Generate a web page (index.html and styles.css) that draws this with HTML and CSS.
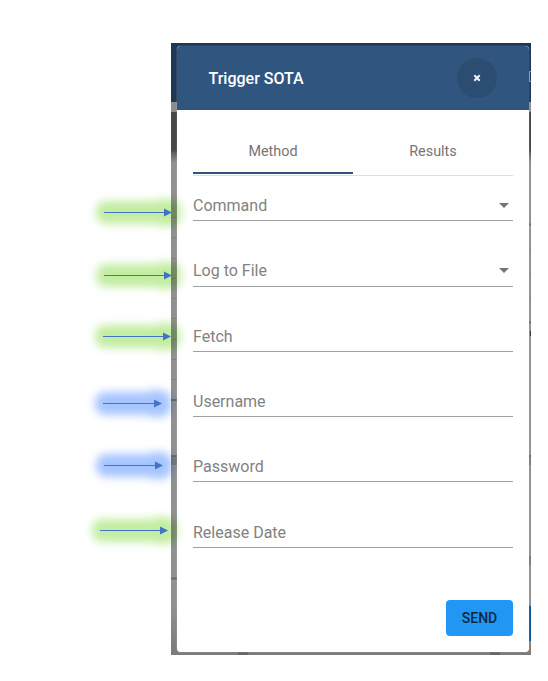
FILE: index.html
```html
<!DOCTYPE html>
<html lang="en">
<head>
<meta charset="utf-8">
<title>Trigger SOTA</title>
<link rel="stylesheet" href="styles.css">
</head>
<body>
<main class="backdrop">
  <svg class="page-edges" width="360" height="612" viewBox="171 43 360 612" aria-hidden="true">
    <path d="M171 217.500h6M171 237.500h6M171 258.500h6M171 278.500h6M171 298.500h6M171 318.500h6M171 339.500h6M171 359.500h6M171 379.500h6M528 249.500h3M528 273.500h3M528 297.500h3" stroke="#828282"/>
    <path d="M171 400h6M171 456h6M171 578.500h6M528 224.500h3M528 322.500h3M528 456h3M528 557.500h3" stroke="#6a6a6a" stroke-width="2"/>
    <path d="M171 457h6v8h-6zM528 457h3v8h-3zM528 558h3v7h-3z" fill="#7c7c7c"/>
    <path d="M530 331h1v5h-1z" fill="#333"/>
    <path d="M238 652h10v3h-10zM490 652h10v3h-10z" fill="#666"/>
    <path d="M532 71.500h-2.500v10h3" fill="none" stroke="#8d99a5"/>
    <path d="M528 606h3v35h-3z" fill="#0b5795"/>
  </svg>
  <section class="dialog">
    <header class="dialog-header">
      <h1>Trigger SOTA</h1>
      <button class="close" aria-label="Close"><svg width="8" height="8" viewBox="0 0 8 8"><path d="M1.300 1.300l5.400 5.400M6.700 1.300L1.300 6.700" stroke="#f0f3f7" stroke-width="2"/></svg></button>
    </header>
    <nav class="tabs">
      <a class="tab active">Method</a>
      <a class="tab">Results</a>
    </nav>
    <form class="fields">
      <div class="field"><span>Command</span><i class="caret"></i></div>
      <div class="field"><span>Log to File</span><i class="caret"></i></div>
      <div class="field"><span>Fetch</span></div>
      <div class="field"><span>Username</span></div>
      <div class="field"><span>Password</span></div>
      <div class="field"><span>Release Date</span></div>
    </form>
    <footer class="actions"><button class="send">SEND</button></footer>
  </section>
</main>
<svg class="annotations" width="548" height="681" viewBox="0 0 548 681" aria-hidden="true">
  <defs>
    <filter id="glow" x="-30%" y="-80%" width="160%" height="260%"><feGaussianBlur stdDeviation="4"/></filter>
    <g id="halo"><rect x="-8" y="-11.500" width="84" height="23" rx="10"/><rect x="48" y="-13.500" width="29" height="27" rx="11"/></g>
    <g id="halo-short"><rect x="-8" y="-11.500" width="75" height="23" rx="10"/><rect x="40" y="-13.500" width="28" height="27" rx="11"/></g>
    <g id="arrow"><path d="M0 0h61" stroke="#4472c4"/><path d="M60 -4l8 4-8 4z" fill="#4472c4"/></g>
    <g id="arrow-short"><path d="M0 0h53" stroke="#4472c4"/><path d="M51 -4l8 4-8 4z" fill="#4472c4"/></g>
  </defs>
  <g class="green">
    <use href="#halo" x="104" y="212.500" filter="url(#glow)"/>
    <use href="#halo" x="104" y="275.500" filter="url(#glow)"/>
    <use href="#halo" x="103" y="336.500" filter="url(#glow)"/>
    <use href="#halo" x="100" y="530.500" filter="url(#glow)"/>
  </g>
  <g class="blue">
    <use href="#halo-short" x="103" y="403.500" filter="url(#glow)"/>
    <use href="#halo-short" x="104" y="465.500" filter="url(#glow)"/>
  </g>
  <use href="#arrow" x="104" y="212.500"/>
  <use href="#arrow" x="104" y="275.500"/>
  <use href="#arrow" x="103" y="336.500"/>
  <use href="#arrow-short" x="103" y="403.500"/>
  <use href="#arrow-short" x="104" y="465.500"/>
  <use href="#arrow" x="100" y="530.500"/>
</svg>
</body>
</html>
```
FILE: styles.css
```css
* { box-sizing: border-box; }
body {
  margin: 0;
  height: 681px;
  padding: 43px 17px 26px 171px;
  overflow: hidden;
  background: #fff;
  font-family: Roboto, "Liberation Sans", sans-serif;
}
.backdrop {
  position: relative;
  width: 360px;
  height: 612px;
  padding: 3px 2px 3px 6px;
  overflow: hidden;
  background: linear-gradient(#1d3852 0 59px, #8c8c8c 59px 69px, #484848 69px 107px, #606060 110px, #7d7d7d 116px, #919191 120px, #919191 560px, #7b7b7b 612px);
}
.page-edges { position: absolute; top: 0; left: 0; }
.dialog {
  position: relative;
  height: 606px;
  display: flex;
  flex-direction: column;
  border-radius: 4px;
  overflow: hidden;
  background: #fff;
  box-shadow: 0 0 1px #ddd;
}
.dialog-header {
  height: 64px;
  padding: 0 32px 0 31.5px;
  display: flex;
  align-items: center;
  justify-content: space-between;
  background: #30567f;
  color: #fff;
}
h1 { margin: 0; font-size: 16px; font-weight: 500; }
.close {
  width: 40px;
  height: 40px;
  padding: 0;
  border: 0;
  border-radius: 50%;
  display: grid;
  place-items: center;
  background: #2b4d72;
}
.tabs {
  height: 66px;
  margin: 0 16px;
  padding-top: 16px;
  display: grid;
  grid-template-columns: 1fr 1fr;
  border-bottom: 1px solid #e0e0e0;
}
.tab {
  height: 49px;
  padding-top: 16px;
  text-align: center;
  font-size: 14.4px;
  line-height: 20px;
  color: #757575;
}
.tab.active { height: 48px; border-bottom: 2px solid #30567f; }
.fields { margin: 0 16px; display: flex; flex-direction: column; }
.field {
  height: 65px;
  padding-bottom: 4px;
  border-bottom: 1px solid #a0a0a0;
  display: flex;
  align-items: flex-end;
  justify-content: space-between;
  font-size: 16px;
  line-height: 20px;
  color: #828282;
}
.field:first-child { height: 45px; }
.field:nth-child(2), .field:last-child { height: 66px; }
.field:nth-child(2) { padding-bottom: 5px; }
.caret {
  margin: 0 4px 8px 0;
  border: 5px solid transparent;
  border-top-color: #757575;
  border-bottom: 0;
}
.actions { margin: auto 16px 16px; display: flex; justify-content: flex-end; }
.send {
  width: 67px;
  height: 36px;
  padding: 0;
  border: 0;
  border-radius: 4px;
  background: #2196f3;
  color: #0b2944;
  font: 500 14px/36px Roboto, sans-serif;
}
.annotations { position: absolute; top: 0; left: 0; pointer-events: none; }
.green, .blue { mix-blend-mode: multiply; }
.green { fill: #c2eda2; }
.blue { fill: #a6c4ff; }
```
